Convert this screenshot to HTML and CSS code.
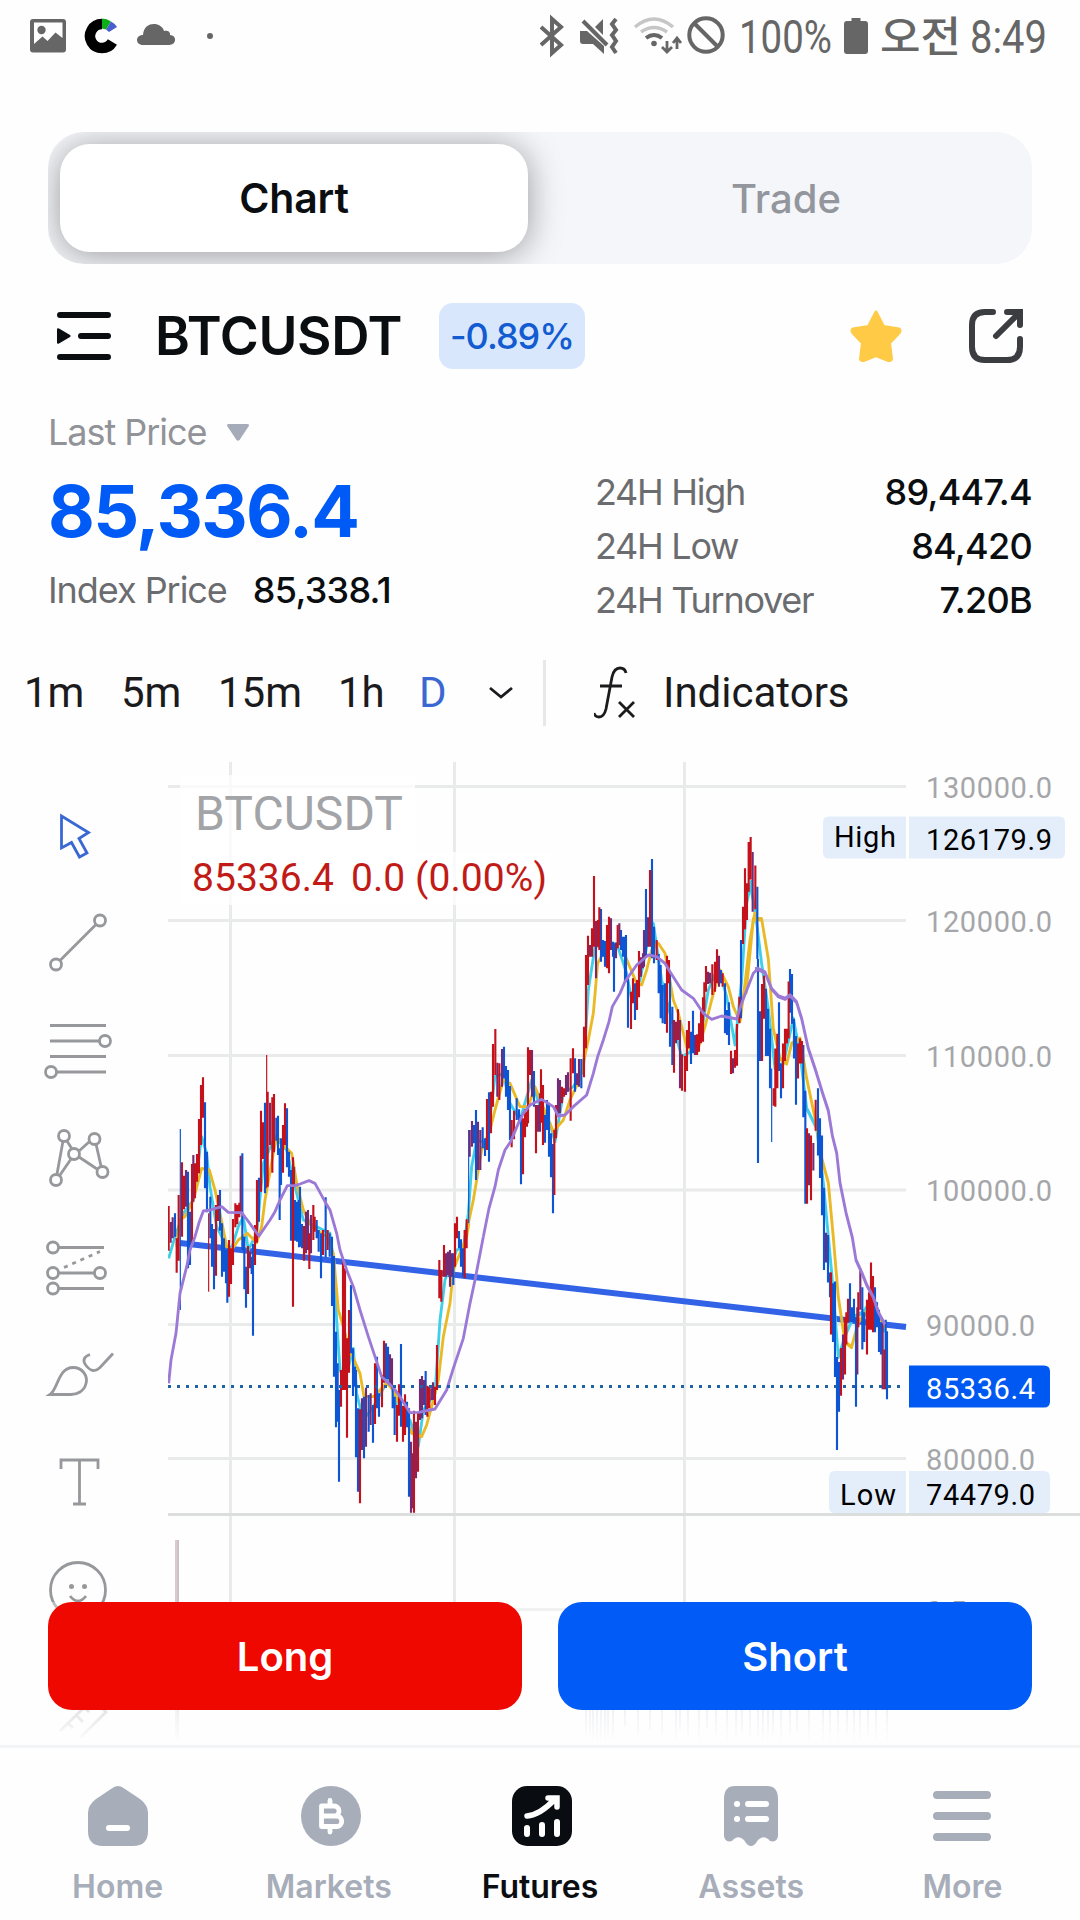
FILE: index.html
```html
<!DOCTYPE html>
<html lang="en">
<head>
<meta charset="utf-8">
<title>BTCUSDT Futures</title>
<link rel="stylesheet" href="styles.css">
</head>
<body>
<div class="screen">
  <header class="status">
    <svg class="status-svg" viewBox="0 0 1080 72">
      <g fill="#666">
        <path fill-rule="evenodd" d="M33 19h30q3 0 3 3v27.500q0 3-3 3H33q-3 0-3-3V22q0-3 3-3zM34 22.500V44l8.500-7.500 5 4.500 8-8.500L62.500 38V22.500z"/>
        <circle cx="41.500" cy="30" r="4.200"/>
        <path d="M143 45h26c8 0 8-10 1-10 1-4-4-5-6-4-2-9-20-11-21 4-8 0-8 10 0 10z"/>
        <circle cx="210" cy="36" r="3"/>
        <path d="M847 21h4.500v-3h9v3h4.500q3 0 3 3v27q0 3-3 3h-18q-3 0-3-3V24q0-3 3-3z"/>
        <path d="M580 31h7l17 15v8l-11-10h-10q-3 0-3-3zM595 27l8-8v16z"/>
        <circle cx="654" cy="43.500" r="2.800"/>
      </g>
      <path d="M112.400 42A12 12 0 1 1 102 24" fill="none" stroke="#000" stroke-width="10.500"/>
      <path d="M102 18.500q5 0 9 3l-5 8-4-1z" fill="#0cae19"/><path d="M111 21.500q4 2 6 5.500l-8 5-3-2.500z" fill="#4a5ed0"/>
      <g fill="none" stroke="#666" stroke-width="4">
        <path d="M541 27l20 18-9 8V19l9 8-20 18"/>
        <path d="M583 21l24 24" stroke-width="4"/>
        <path d="M616 19l-4 5 4 6-4 5 4 6-4 6 4 6"/>
        <path d="M646 38q8-6 16 0"/>
        <path d="M667 41v10m-5-4l5 5 5-5M677 49V39m-4 4l4-5 4 5" stroke-width="2.800"/>
        <circle cx="706" cy="35" r="16.700"/><path d="M694 23l24 24"/>
      </g>
      <g fill="none" stroke="#c6c6c6" stroke-width="3.500"><path d="M635 27q19-16 38 0M641 32q13-9 26 0"/></g>
      <g fill="#666" class="status-text">
        <text x="739" y="53" textLength="93" lengthAdjust="spacingAndGlyphs">100%</text>
        <text class="ko" x="880" y="52" textLength="81" lengthAdjust="spacingAndGlyphs">오전</text>
        <text x="970" y="53" textLength="77" lengthAdjust="spacingAndGlyphs">8:49</text>
      </g>
    </svg>
  </header>

  <div class="tabs"><div class="tab active">Chart</div><div class="tab">Trade</div></div>

  <div class="pair">
    <svg class="menu" width="54" height="48" viewBox="0 0 54 48"><path d="M3 3h48M24 24h27M3 45h48" stroke="#0b0e11" stroke-width="6" stroke-linecap="round"/><path d="M0 17.500q0-2 2-1l11 6.500q1.500 1 0 2L2 31.500q-2 1-2-1z" fill="#0b0e11"/></svg>
    <h1>BTCUSDT</h1>
    <span class="badge">-0.89%</span>
    <svg class="star" width="54" height="54" viewBox="0 0 54 54"><path d="M27 3l7.500 14.500L50 20Q52 21.500 50 24L40.500 34l2 16q-.500 2-3 1.500L27 46.500l-12.500 5q-2.500 .500-3-1.500l2-16L4 24q-2-2.500 0-4l15.500-2.500z" fill="#ffca45" stroke="#ffca45" stroke-width="3" stroke-linejoin="round"/></svg>
    <svg class="share" width="54" height="54" viewBox="0 0 54 54" fill="none" stroke="#3c3d41" stroke-width="6" stroke-linecap="round"><path d="M24 3H16Q3 3 3 16v22q0 13 13 13h22q13 0 13-13V30M38 3h13v13" /><path d="M27 27L50 4"/></svg>
  </div>

  <section class="prices">
    <div class="left">
      <div class="last">Last Price <svg width="22" height="17" viewBox="0 0 22 17"><path d="M2 0h18q3 0 1.500 2.500l-9 13.500q-1.500 1.500-3 0L.500 2.500Q-1 0 2 0z" fill="#a5abb8"/></svg></div>
      <div class="big">85,336.4</div>
      <div class="index"><span>Index Price</span><b>85,338.1</b></div>
    </div>
    <dl>
      <div><dt>24H High</dt><dd>89,447.4</dd></div>
      <div><dt>24H Low</dt><dd>84,420</dd></div>
      <div><dt>24H Turnover</dt><dd>7.20B</dd></div>
    </dl>
  </section>

  <nav class="intervals">
    <span class="i1">1m</span><span class="i2">5m</span><span class="i3">15m</span><span class="i4">1h</span><span class="i5">D</span>
    <svg class="chev" width="26" height="14" viewBox="0 0 26 14"><path d="M2 2l11 9 11-9" fill="none" stroke="#1b1b1d" stroke-width="2.800"/></svg>
    <i class="sep"></i>
    <svg class="fx" width="42" height="54" viewBox="0 0 42 54" fill="none" stroke="#1b1b1d" stroke-width="2.800"><path d="M32 7q-1-5-6-5-6 0-8 9l-6 32q-2 8-7 8-4 0-5-4M6 20h22M25 36l15 15M40 36L25 51"/></svg>
    <span>Indicators</span>
  </nav>

  <main class="chart">
    <aside class="tools">
      <svg viewBox="38 796 80 80"><path class="blue" d="M61.500 816v32l10-5.500 8 14.500 7.500-4-8-14.500 9.500-6z"/></svg>
      <svg viewBox="38 903.500 80 80"><circle cx="56" cy="964" r="5.500"/><circle cx="100" cy="920" r="5.500"/><path d="M60 960l36-36"/></svg>
      <svg viewBox="38 1011 80 80"><path d="M50 1025.500h56M50 1041h49M50 1056.500h56M57 1072h49"/><circle cx="105" cy="1041" r="5.500"/><circle cx="51" cy="1072" r="5.500"/></svg>
      <svg viewBox="38 1119 80 80"><circle cx="64" cy="1136" r="5.500"/><circle cx="94.500" cy="1139" r="5.500"/><circle cx="74" cy="1154" r="5.500"/><circle cx="56" cy="1180" r="5.500"/><circle cx="102.500" cy="1172" r="5.500"/><path d="M63 1141l-6 33M67 1141l5 8M79 1151l10-9M96 1144l5 22M79 1157l18 12M71 1159l-11 16"/></svg>
      <svg viewBox="38 1226.500 80 80"><circle cx="53" cy="1247" r="5.500"/><circle cx="53" cy="1272.500" r="5.500"/><circle cx="53" cy="1288" r="5.500"/><circle cx="100" cy="1272.500" r="5.500"/><path d="M59 1247h45M59 1272.500h35M59 1288h45"/><path stroke-dasharray="4 5" d="M64 1267l36-16"/></svg>
      <svg viewBox="38 1334.500 80 80"><path d="M50 1395c8-5 8-27 23-27 10 0 15 9 13 16-2 8-9 11-15 11zM90 1355c-6 2-8 6-4 11q7 9 14 2l13-14"/></svg>
      <svg viewBox="38 1442 80 80"><path d="M61 1469v-9h37v9M79.500 1460v44M73 1504h13"/></svg>
      <svg viewBox="38 1550 80 80"><circle cx="78" cy="1590" r="27.500"/><g class="dots"><circle cx="71.500" cy="1586.500" r="2.500"/><circle cx="84.500" cy="1586.500" r="2.500"/></g><path d="M70 1596q8 10 16 0"/></svg>
      <svg viewBox="38 1657 80 80"><path d="M60 1731l33-32 13 13-31 31M68 1723l5 5M76 1715l7 7M84 1707l5 5"/></svg>
    </aside>
    <svg class="plot" width="912" height="983" viewBox="168 762 912 983">
      <path class="grid" d="M168 786.500H906M168 920.500H906M168 1055.500H906M168 1190H906M168 1324.500H906M168 1458.500H906M168 1609.500H906M230.500 762V1660M454.500 762V1660M684.500 762V1660"/>
      <path d="M168 1514.500H1080" stroke="#dcdddd" stroke-width="3"/>
      <rect x="180" y="775" width="235" height="77" fill="#fff" opacity=".75"/><rect x="180" y="852" width="370" height="53" fill="#fff" opacity=".75"/>
      <path d="M176 1540V1740" stroke="#d3b9bd" stroke-width="1.500"/><path d="M178 1540V1740" stroke="#9b8488" stroke-width="1"/>
      <path d="M180 1243L906 1327" stroke="#3262e6" stroke-width="6"/>

      <!-- moving averages, fast and medium -->
      <g class="ma cyan">
        <path transform="translate(160 1020) scale(.33333)" d="M26 715L45 650 70 580 100 540 125 350 140 400 150 500 170 620 190 660 210 700 235 620 250 590 265 690 290 640 310 430 345 350 380 390 400 480 430 600 470 620 510 640 522 740 530 900 540 1050 555 1080 580 985 590 1120 610 1200 640 1160 690 1070 710 1160 750 1200 775 1280 790 1170 825 1120 840 900 855 780 890 690 910 685 925 580"/>
        <path transform="translate(440 840) scale(.33333)" d="M85 1120L95 980 110 900 140 910 165 710 190 700 210 790 240 840 275 720 300 800 330 850 345 905 370 760 400 740 430 690 445 450 465 320 530 310 560 400 575 480 600 420 620 320 640 250 665 420 690 520 725 650 745 640 780 600 805 450 835 380 860 470 885 615 905 420 920 190 935 120"/>
        <path transform="translate(700 760) scale(.33333 .4975)" d="M150 250L165 300 185 410 205 500 225 620 250 610 280 520 300 590 320 700 350 740 370 850 395 1030 415 1200 440 1150 460 1120 490 1110 520 1080 555 1150"/>
      </g>
      <g class="ma gold">
        <path transform="translate(160 1020) scale(.33333)" d="M50 680L60 600 75 590 100 540 125 445 148 450 165 510 180 580 200 680 215 690 235 660 262 640 290 668 305 620 315 540 340 400 350 350 375 380 395 400 410 490 430 570 455 620 500 650 520 700 535 870 550 920 565 980 600 1060 612 1130 640 1130 680 1090 700 1110 730 1180 755 1240 785 1250 800 1215 815 1160 835 1080 850 950 870 850 880 750 900 700 920 650 927 610"/>
        <path transform="translate(440 840) scale(.33333)" d="M85 1150L100 1080 110 1020 125 930 150 870 165 810 190 720 210 730 240 800 265 800 285 740 305 790 325 840 340 875 370 840 390 780 420 715 445 600 460 520 473 370 500 320 540 310 565 370 590 430 605 435 620 390 635 330 655 310 675 340 700 480 715 520 740 620 770 640 795 560 815 480 840 390 865 440 880 500 900 545 915 430 930 300 945 215"/>
        <path transform="translate(700 760) scale(.33333 .4975)" d="M138 470L160 320 185 320 205 400 220 540 240 600 260 610 275 570 300 560 320 640 345 720 365 800 385 850 400 960 415 1080 435 1170 455 1180 475 1130 500 1110 520 1100 555 1140"/>
      </g>

      <g class="candles" transform="translate(160 1020) scale(.33333)">
        <path class="b" d="M45 580V650M84 455V745M90 575V735M135 247V505M141 395V577M151 530V655M156 612V740M162 627V808M180 510V632M186 610V770M192 655V755M198 690V790M202 685V848M247 400V690M253 650V808M258 740V863M275 710V762M279 672V947M297 473V605M315 248V520M349 293V362M354 287V405M359 385V600M363 355V495M381 265V442M387 395V470M393 450V662M405 540V662M411 545V665M417 540V682M420 500V680M426 612V685M470 600V655M476 630V695M483 640V775M497 532V712M509 640V710M516 650V858M522 708V1070M528 935V1222M533 1030V1205M537 1110V1385M573 795V1000M579 985V1128M585 1040V1100M588 1050V1312M594 1165V1415M612 1130V1315M626 1125V1235M639 1155V1268M651 1010V1165M657 1120V1190M678 970V1078M684 980V1078M698 1100V1165M704 1130V1245M723 972V1220M741 1145V1222M747 1165V1430M797 1053V1185M880 700V795M897 633V685M903 658V740M909 685V770"/>
        <path class="p" d="M32 606V668M38 592V655M78 450V560M100 405V545M242 407V578M270 695V745M330 248V375M402 440V500M438 575V700M444 570V690M453 585V700M606 1135V1290M618 1103V1280M632 1120V1215M690 1003V1090M696 1015V1105M753 1265V1478M758 1300V1465M768 1205V1375M780 1077V1200M786 1068V1195M792 1080V1155M814 1105V1140M819 1087V1140M858 700V770M864 695V765M870 690V800M876 700V770"/>
        <path class="r" d="M26 558V692M50 655V758M56 525V722M66 427V650M72 467V568M96 432V680M105 430V535M111 402V485M117 297V460M123 195V375M129 172V293M168 555V767M174 525V603M207 660V830M213 685V792M219 597V735M226 550V622M232 555V613M238 548V592M264 678V822M285 615V735M291 480V668M303 272V515M309 307V417M323 215V500M337 232V458M342 222V397M369 315V458M375 250V375M399 412V860M432 618V722M448 640V747M460 555V660M464 590V635M489 630V705M503 630V690M543 1050V1160M549 715V1110M555 745V1110M561 955V1253M567 870V1058M600 1168V1450M645 1030V1212M666 1065V1162M672 962V1088M711 1155V1265M717 1093V1187M729 1157V1265M735 1123V1245M762 1172V1478M774 1175V1355M802 1097V1190M808 1100V1165M825 1100V1155M831 975V1110M838 720V835M844 750V845M852 675V770M885 610V740M891 590V655M914 630V775M920 598V685"/>
        <path class="b thin" d="M61 327V870M926 330V610"/><path class="r thin" d="M146 580V815M320 105V505"/>
      </g>
      <g class="candles" transform="translate(440 840) scale(.33333)">
        <path class="b" d="M102 855V910M108 810V1020M128 862V925M135 895V948M147 757V965M192 620V715M198 678V770M204 690V810M210 738V900M230 775V840M237 808V850M243 825V1033M282 693V800M315 825V908M321 780V870M327 788V950M333 880V1012M339 912V1120M405 655V755M424 657V745M483 207V365M489 300V350M495 303V380M519 305V350M522 310V455M543 270V330M549 290V350M555 290V425M558 285V425M564 410V563M585 430V540M618 147V350M636 57V355M642 260V370M656 342V460M662 375V535M668 435V550M675 430V552M690 395V620M697 500V675M753 575V672M759 512V640M843 390V430M855 430V580M861 510V585M867 487V615M903 300V535"/>
        <path class="p" d="M89 870V950M96 843V920M114 845V990M121 870V990M172 668V770M186 627V740M276 630V770M294 795V875M300 760V875M354 715V825M360 720V820M378 705V765M384 697V755M411 700V735M417 657V740M450 315V350M468 243V415M513 235V330M528 308V355M538 250V315M603 352V410M609 340V385M612 270V380M624 232V320M708 545V610M720 540V745M765 585V645M804 395V432M810 398V430M837 347V440M879 655V700"/>
        <path class="r" d="M141 777V930M153 755V880M159 612V800M166 567V705M178 670V780M215 840V922M222 812V898M249 835V1003M255 808V892M261 815V860M264 622V850M270 630V705M288 795V940M303 688V848M309 735V915M343 870V1065M348 795V895M366 740V790M372 745V770M392 655V842M399 625V700M432 560V712M438 345V625M444 287V435M456 265V350M462 108V320M474 240V320M478 202V330M501 255V385M507 230V400M533 255V325M573 455V567M579 415V490M591 420V510M597 333V472M630 90V320M650 300V360M681 347V578M687 360V430M702 540V698M714 508V600M726 643V752M735 648V755M741 570V693M747 543V625M771 583V645M777 550V635M783 513V610M789 472V605M793 427V515M798 378V455M817 373V465M825 365V455M831 328V430M848 400V440M873 632V702M885 630V683M891 552V677M898 470V550M909 200V312M915 85V268M921 130V240"/>
      </g>
      <g class="candles" transform="translate(700 760) scale(.33333 .4975)">
        <path class="b" d="M172 255V400M180 505V605M198 460V595M204 500V595M210 540V660M237 487V625M243 610V680M270 420V508M276 430V530M282 520V600M288 555V693M310 573V718M316 665V892M354 660V795M360 720V840M366 755V915M372 860V1025M384 955V1050M390 1030V1080M399 1052V1170M405 1048V1240M411 1200V1387M417 1210V1310M450 1052V1130M456 1100V1130M462 1083V1130M468 1120V1300M487 1060V1185M493 1110V1170M525 1060V1150M531 1090V1140M537 1105V1190M543 1130V1195M557 1125V1265M561 1148V1285"/>
        <path class="b" d="M174 400V810"/><path class="b thin" d="M215 620V768"/>
        <path class="p" d="M158 185V305M327 750V855M340 770V825M378 950V1010M429 1155V1245M472 1100V1235M481 1022V1105M548 1130V1265"/>
        <path class="r" d="M146 165V265M152 155V240M166 212V300M186 450V605M192 433V520M221 660V695M226 580V697M232 550V660M249 570V660M255 540V605M261 540V570M266 445V560M294 570V640M300 560V610M306 565V610M321 740V892M333 755V885M347 683V745M393 1030V1155M423 1182V1278M435 1120V1235M439 1110V1175M444 1083V1130M475 1070V1140M501 1085V1195M507 1070V1145M513 1010V1145M519 1037V1150M553 1185V1265"/>
      </g>

      <!-- slow moving average -->
      <g class="ma violet">
        <path transform="translate(160 1020) scale(.33333)" d="M26 1090L33 1020 48 940 60 820 80 740 90 690 105 650 118 605 130 573 150 570 185 560 205 577 245 578 262 600 280 625 297 648 330 600 345 575 360 540 382 497 405 497 420 492 447 482 465 490 495 545 510 570 530 640 540 690 560 750 580 800 600 870 625 950 645 1010 665 1070 700 1103 720 1130 750 1178 775 1177 825 1167 860 1110 880 1045 910 955 930 850 945 780 970 650"/>
        <path transform="translate(440 840) scale(.33333)" d="M130 1190L147 1105 165 1040 175 990 195 930 212 905 235 850 250 820 270 795 305 778 340 800 355 828 375 825 400 800 440 765 460 700 473 650 490 600 507 545 517 500 540 460 555 425 590 375 625 345 650 350 675 370 690 395 725 450 760 475 790 520 815 538 845 528 890 537 905 490 940 400 955 385"/>
        <path transform="translate(700 760) scale(.33333 .4975)" d="M165 421L174 420 195 427 215 460 235 475 255 480 270 473 290 487 305 520 325 580 345 620 368 670 385 705 397 755 410 790 420 850 438 910 457 960 468 1005 485 1030 500 1055 520 1080 535 1110 555 1135"/>
      </g>
      <path d="M168 1386.500H903" stroke="#1d63a5" stroke-width="3" stroke-dasharray="3 6"/>

      <g class="legend">
        <text x="195" y="830" font-size="48" fill="#a3a4a8" textLength="208">BTCUSDT</text>
        <text x="192" y="891" font-size="39" fill="#c11b17" textLength="142">85336.4</text>
        <text x="351" y="891" font-size="39" fill="#c11b17" textLength="196">0.0 (0.00%)</text>
      </g>
      <path fill="#e4eefb" d="M829 816.500h77v42h-77q-6 0-6-6v-30q0-6 6-6zM909 816.500h150q6 0 6 6v30q0 6-6 6H909zM835 1471h71v42h-71q-6 0-6-6v-30q0-6 6-6zM909 1471h135q6 0 6 6v30q0 6-6 6H909z"/>
      <path fill="#0058f3" d="M909 1365.500h135q6 0 6 6v30q0 6-6 6H909z"/>
      <g class="axis" fill="#a5a6a9">
        <text x="926" y="798" textLength="126">130000.0</text>
        <text x="926" y="932" textLength="126">120000.0</text>
        <text x="926" y="1067" textLength="126">110000.0</text>
        <text x="926" y="1201" textLength="126">100000.0</text>
        <text x="926" y="1336" textLength="109">90000.0</text>
        <text x="926" y="1470" textLength="109">80000.0</text>
        <text x="926" y="1622">0.5</text>
      </g>
      <g class="axis" fill="#000">
        <text x="834" y="847" textLength="62">High</text><text x="926" y="850" textLength="126">126179.9</text>
        <text x="840" y="1505" textLength="56">Low</text><text x="926" y="1505" textLength="109">74479.0</text>
        <text x="926" y="1399" textLength="109" fill="#fff">85336.4</text>
      </g>
      <path class="volume" d="M586 1700V1735M590 1700V1742M593 1700V1738M597 1700V1744M601 1700V1741M605 1700V1740M608 1700V1737M613 1700V1744M625 1700V1726M638 1700V1734M650 1700V1730M662 1700V1735M676 1700V1742M680 1700V1730M688 1700V1740M699 1700V1744M707 1700V1728M716 1700V1737M727 1700V1743M736 1700V1744M742 1700V1732M750 1700V1738M758 1700V1744M763 1700V1743M768 1700V1744M773 1700V1735M781 1700V1744M790 1700V1735M797 1700V1732M809 1700V1742M823 1700V1740M830 1700V1744M838 1700V1744M847 1700V1733M854 1700V1744M860 1700V1744M868 1700V1737M876 1700V1743M887 1700V1742"/>
    </svg>
    <div class="actions"><button class="long">Long</button><button class="short">Short</button></div>
  </main>

  <nav class="bottom">
    <a><svg viewBox="0 0 60 60"><path d="M23 3q7-6 14 0l15 10q8 6 8 14v18q0 15-15 15H15Q0 60 0 45V27q0-8 8-14z" fill="#a7adb9"/><path d="M21 42h18" stroke="#fff" stroke-width="6" stroke-linecap="round"/></svg>Home</a>
    <a class="nudge"><svg viewBox="0 0 60 60"><circle cx="30" cy="30" r="30" fill="#a7adb9"/><path d="M20.500 20H33a5 5 0 0 1 0 10H20.500M33 30h2.500a5 5 0 0 1 0 10.500H20.500V20M29 14.500v5M29 41v5" fill="none" stroke="#fff" stroke-width="4.800" stroke-linecap="round" stroke-linejoin="round"/></svg>Markets</a>
    <a class="on nudge"><svg viewBox="0 0 60 60"><rect width="60" height="60" rx="15" fill="#090d11"/><path d="M15 42v6M30 39v9M45 36v12" stroke="#fff" stroke-width="6" stroke-linecap="round"/><path d="M15 30Q28 29 43 13M36 12h9v9" fill="none" stroke="#fff" stroke-width="5.500" stroke-linecap="round"/></svg>Futures</a>
    <a><svg viewBox="0 0 60 60"><path d="M3 13Q3 0 14 0h32q11 0 11 13v37q-1 7-8 5-6-7-12-1-7 12-14 0-6-6-12 1-7 2-8-5z" fill="#a7adb9"/><path d="M27 18h18M27 33h18M16 18h.1M16 33h.1" stroke="#fff" stroke-width="6" stroke-linecap="round"/></svg>Assets</a>
    <a><svg viewBox="0 0 60 60"><path d="M5 9h50M5 30h50M5 51h50" stroke="#a7adb9" stroke-width="8" stroke-linecap="round"/></svg>More</a>
  </nav>
</div>
</body>
</html>
```
FILE: styles.css
```css
* { box-sizing: border-box; }
body { margin: 0; background: #fdfefe; font-family: Inter, "Liberation Sans", "Noto Sans CJK KR", sans-serif; color: #0b0e11; }
svg { display: block; flex: none; }
.screen { width: 1080px; height: 1920px; overflow: hidden; display: flex; flex-direction: column; background: #fefefe; }
.status { height: 132px; flex: none; }
.status-svg { width: 1080px; height: 72px; }
.status-text { font: 46px Roboto, sans-serif; }
.status-text .ko { font: 500 42px "Noto Sans CJK KR", sans-serif; }

.tabs { flex: none; height: 132px; width: 984px; margin: 0 48px; padding: 12px; display: flex; gap: 24px; border-radius: 36px; background: #f5f6fa; overflow: hidden; }
.tab { flex: 1; display: flex; align-items: center; justify-content: center; border-radius: 30px; font-size: 40px; font-weight: 500; color: #93969c; }
.tab.active { background: #fff; color: #0b0e11; font-size: 41px; font-weight: 600; letter-spacing: -0.2px; box-shadow: 0 3px 34px rgba(0,0,0,.38); }

.pair { flex: none; height: 144px; padding: 0 57px; display: flex; align-items: center; }
.pair h1 { margin: 0 0 0 44px; width: 284px; font-size: 53px; font-weight: 600; letter-spacing: -0.3px; line-height: 66px; white-space: nowrap; flex: none; }
.badge { height: 66px; width: 146px; border-radius: 14px; background: #d9e7fd; color: #125bd0; font-size: 36px; font-weight: 500; letter-spacing: -1px; line-height: 66px; text-align: center; flex: none; }
.star { margin-left: auto; }
.share { margin-left: 66px; }

.prices { flex: none; height: 237px; padding: 0 48px; display: flex; }
.left { width: 547px; }
.last { display: flex; align-items: center; gap: 21px; height: 48px; font-size: 36px; letter-spacing: -1.05px; color: #919398; }
.big { height: 90px; margin-top: 10px; line-height: 90px; font-size: 72px; font-weight: 700; letter-spacing: -1.7px; color: #005af6; white-space: nowrap; }
.index { height: 48px; line-height: 48px; margin-top: 10px; display: flex; gap: 26px; font-size: 36px; letter-spacing: -1.05px; color: #6b6c6f; white-space: nowrap; }
.index b { font-weight: 500; letter-spacing: -0.7px; color: #0b0e11; }
dl { flex: 1; margin: 57px 0 0; }
dl div { display: flex; justify-content: space-between; height: 54px; line-height: 54px; font-size: 36px; }
dt { color: #6b6c6f; letter-spacing: -1.3px; }
dd { margin: 0; font-weight: 500; letter-spacing: -0.7px; }

.intervals { flex: none; height: 117px; padding: 15px 24px 0; display: flex; align-items: flex-start; font: 42px/66px Roboto, sans-serif; color: #1b1b1d; }
.intervals span { white-space: nowrap; }
.i1 { width: 97px; }
.i2 { width: 97px; }
.i3 { width: 120px; }
.i4 { width: 81px; }
.i5 { width: 69px; color: #3a68d3; }
.chev { margin-top: 26px; }
.sep { width: 3px; height: 66px; margin: 0 48px 0 29px; background: #e8e8e8; }
.fx { margin: 6px 27px 0 0; }

.chart { position: relative; flex: none; height: 983px; display: flex; overflow: hidden; }
.tools { width: 168px; padding: 20px 0 0 38px; display: flex; flex-direction: column; }
.tools svg { width: 80px; height: 80px; margin: 13.85px 0; fill: none; stroke: #96989b; stroke-width: 2.8; }
.tools .blue { stroke: #3a68d3; }
.tools .dots { fill: #96989b; stroke: none; }
.grid { fill: none; stroke: #e9eaea; stroke-width: 3; }
.ma path { fill: none; stroke-width: 8.5; stroke-linejoin: round; }
.cyan { stroke: #3fd0e8; }
.gold { stroke: #e9ba25; }
.violet { stroke: #9c79d6; }
.candles path { fill: none; stroke-width: 6.4; }
.candles .thin { stroke-width: 3.5; }
.candles .b { stroke: #0d55d3; }
.candles .r { stroke: #c4121d; }
.candles .p { stroke: #742b75; }
.legend { font-family: Roboto, sans-serif; }
.axis { font: 29px Roboto, sans-serif; }
.volume { stroke: #c3c7d6; stroke-width: 1.7; }
.actions { position: absolute; left: 0; right: 0; top: 840px; height: 143px; padding: 0 48px; display: flex; align-items: flex-start; gap: 36px; background: linear-gradient(rgba(254,254,254,.35), rgba(254,254,254,.68) 70%, #fefefe 98%); }
.actions button { flex: 1; height: 108px; border: 0; border-radius: 24px; color: #fff; font: 600 40px Inter, sans-serif; }
.long { background: #ee0800; }
.short { background: #005bf7; }

.bottom { flex: 1; border-top: 3px solid #f3f4f5; padding: 38px 12px 0; display: flex; }
.bottom a { flex: 1; display: flex; flex-direction: column; align-items: center; gap: 21px; font-size: 32px; font-weight: 600; line-height: 40px; color: #a7adb9; }
.bottom svg { width: 60px; height: 60px; }
.bottom .nudge svg { margin-left: 4px; }
.bottom .on { color: #0b0e11; }
```
